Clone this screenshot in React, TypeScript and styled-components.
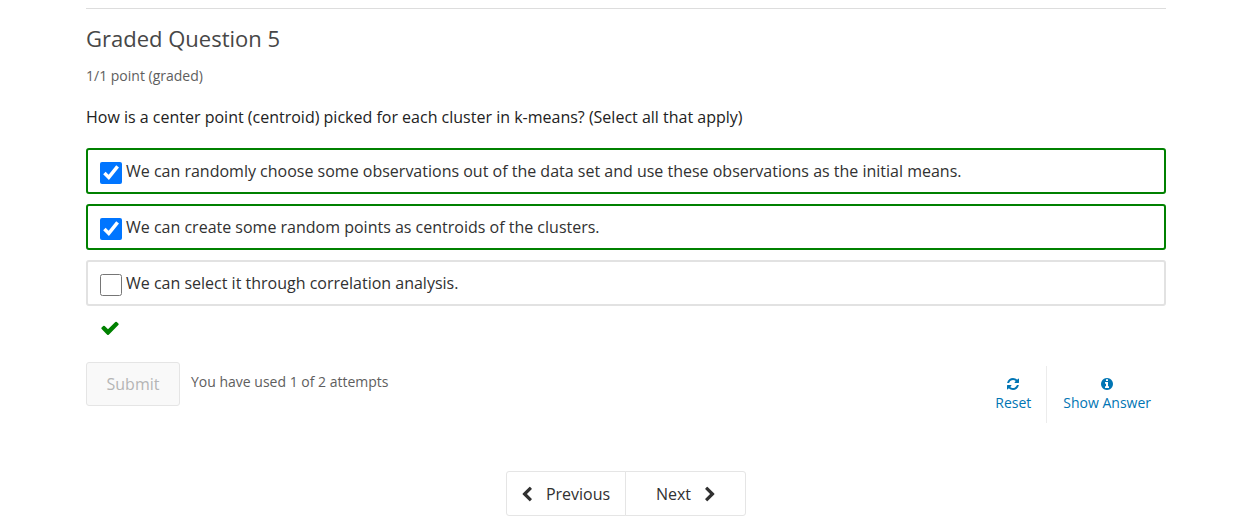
import React from "react";
import styled, { createGlobalStyle } from "styled-components";

const Global = createGlobalStyle`
  * { box-sizing: border-box; }
  body { margin: 0; background: #fff; color: #313131; font-family: "Open Sans", sans-serif; font-size: 16px; }
  button { font-family: inherit; cursor: pointer; }
`;

const Page = styled.main`
  padding: 8px 87px 4px 86px;
`;

const Problem = styled.form`
  border-top: 1px solid #ddd;
  padding-top: 16px;
`;

const Title = styled.h3`
  margin: 0;
  font-size: 22px;
  line-height: 26px;
  font-weight: 400;
  color: #474747;
`;

const Progress = styled.p`
  margin: 15px 0 0;
  font-size: 14px;
  line-height: 20px;
  color: #5e5e5e;
`;

const Choices = styled.fieldset`
  margin: 0;
  padding: 0;
  border: 0;
  min-width: 0;
`;

const Question = styled.legend`
  padding: 19px 0;
  line-height: 24px;
  color: #222;
`;

const Choice = styled.label<{ $correct: boolean }>`
  display: flex;
  align-items: center;
  gap: 4px;
  min-height: 46px;
  margin-bottom: 10px;
  padding: 0 12px;
  border: 2px solid ${(p) => (p.$correct ? "#008100" : "#e2e2e2")};
  border-radius: 3px;
`;

const Box = styled.input`
  flex: none;
  width: 22px;
  height: 22px;
  margin: 4px 0 0;
  accent-color: #0075ff;
`;

const Status = styled.div`
  display: flex;
  padding: 2px 14px 0;
  color: #008100;
`;

const Actions = styled.div`
  display: flex;
  align-items: flex-start;
  margin-top: 24px;
`;

const Submit = styled.button`
  width: 94px;
  height: 44px;
  border: 1px solid #e5e5e5;
  border-radius: 3px;
  background: #f9f9f9;
  color: #b5b5b5;
  font-size: 16px;
`;

const Attempts = styled.span`
  margin: 10px auto 0 11px;
  font-size: 14px;
  line-height: 20px;
  color: #5e5e5e;
`;

const Action = styled.button`
  display: flex;
  flex-direction: column;
  align-items: center;
  gap: 2px;
  height: 57px;
  margin-top: 4px;
  padding: 11px 15px 0;
  border: 0;
  background: none;
  color: #0075b4;
  font-size: 14px;
  line-height: 20px;
  & + & { border-left: 1px solid #ececec; padding-left: 16px; }
`;

const Pager = styled.nav`
  display: flex;
  justify-content: center;
  margin-top: 48px;
`;

const PageButton = styled.button`
  display: flex;
  align-items: center;
  justify-content: center;
  gap: 14px;
  width: 120px;
  height: 45px;
  padding: 0;
  border: 1px solid #e5e5e5;
  border-radius: 3px 0 0 3px;
  background: #fff;
  color: #313131;
  font-size: 16px;
  & + & { width: 121px; margin-left: -1px; border-radius: 0 3px 3px 0; }
`;

const Glyph = styled.svg`
  display: block;
  flex: none;
  fill: currentColor;
`;

const CheckIcon = () => (
  <Glyph width="20" height="20" viewBox="0 0 1792 1792" aria-hidden="true">
    <path d="M1671 566q0 40-28 68l-724 724-136 136q-28 28-68 28t-68-28l-136-136-362-362q-28-28-28-68t28-68l136-136q28-28 68-28t68 28l294 295 656-657q28-28 68-28t68 28l136 136q28 28 28 68z" />
  </Glyph>
);

const RefreshIcon = () => (
  <Glyph width="14" height="14" viewBox="0 0 1792 1792" aria-hidden="true">
    <path d="M1639 1056q0 5-1 7-64 268-268 434.5t-478 166.5q-146 0-282.5-55t-243.5-157l-129 129q-19 19-45 19t-45-19-19-45v-448q0-26 19-45t45-19h448q26 0 45 19t19 45-19 45l-137 137q71 66 161 102t187 36q134 0 250-65t186-179q11-17 53-117 8-23 30-23h192q13 0 22.5 9.5t9.5 22.5zm25-800v448q0 26-19 45t-45 19h-448q-26 0-45-19t-19-45 19-45l138-138q-148-137-349-137-134 0-250 65t-186 179q-11 17-53 117-8 23-30 23h-199q-13 0-22.5-9.5t-9.5-22.5v-7q65-268 270-434.5t480-166.5q146 0 284 55.5t245 156.5l130-129q19-19 45-19t45 19 19 45z" />
  </Glyph>
);

const InfoIcon = () => (
  <Glyph width="14" height="14" viewBox="0 0 1792 1792" aria-hidden="true">
    <path d="M1152 1376v-160q0-14-9-23t-23-9h-96v-512q0-14-9-23t-23-9h-320q-14 0-23 9t-9 23v160q0 14 9 23t23 9h96v320h-96q-14 0-23 9t-9 23v160q0 14 9 23t23 9h448q14 0 23-9t9-23zm-128-896v-160q0-14-9-23t-23-9h-192q-14 0-23 9t-9 23v160q0 14 9 23t23 9h192q14 0 23-9t9-23zm640 416q0 209-103 385.5t-279.5 279.5-385.5 103-385.5-103-279.5-279.5-103-385.5 103-385.5 279.5-279.5 385.5-103 385.5 103 279.5 279.5 103 385.5z" />
  </Glyph>
);

const LeftIcon = () => (
  <Glyph width="10" height="16" viewBox="345 -64 1120 1792" aria-hidden="true">
    <path d="M1427 301l-531 531 531 531q19 19 19 45t-19 45l-166 166q-19 19-45 19t-45-19l-742-742q-19-19-19-45t19-45l742-742q19-19 45-19t45 19l166 166q19 19 19 45t-19 45z" />
  </Glyph>
);

const RightIcon = () => (
  <Glyph width="10" height="16" viewBox="325 -64 1120 1792" aria-hidden="true">
    <path d="M1363 877l-742 742q-19 19-45 19t-45-19l-166-166q-19-19-19-45t19-45l531-531-531-531q-19-19-19-45t19-45l166-166q19-19 45-19t45 19l742 742q19 19 19 45t-19 45z" />
  </Glyph>
);

const options = [
  { text: "We can randomly choose some observations out of the data set and use these observations as the initial means.", checked: true },
  { text: "We can create some random points as centroids of the clusters.", checked: true },
  { text: "We can select it through correlation analysis.", checked: false },
];

export default function App() {
  return (
    <Page>
      <Global />
      <Problem>
        <Title>Graded Question 5</Title>
        <Progress>1/1 point (graded)</Progress>
        <Choices>
          <Question>How is a center point (centroid) picked for each cluster in k-means? (Select all that apply)</Question>
          {options.map((o) => (
            <Choice key={o.text} $correct={o.checked}>
              <Box type="checkbox" defaultChecked={o.checked} />
              {o.text}
            </Choice>
          ))}
        </Choices>
        <Status role="img" aria-label="Correct"><CheckIcon /></Status>
        <Actions>
          <Submit type="submit" disabled>Submit</Submit>
          <Attempts>You have used 1 of 2 attempts</Attempts>
          <Action type="button"><RefreshIcon />Reset</Action>
          <Action type="button"><InfoIcon />Show Answer</Action>
        </Actions>
      </Problem>
      <Pager aria-label="Unit navigation">
        <PageButton type="button"><LeftIcon />Previous</PageButton>
        <PageButton type="button">Next<RightIcon /></PageButton>
      </Pager>
    </Page>
  );
}
